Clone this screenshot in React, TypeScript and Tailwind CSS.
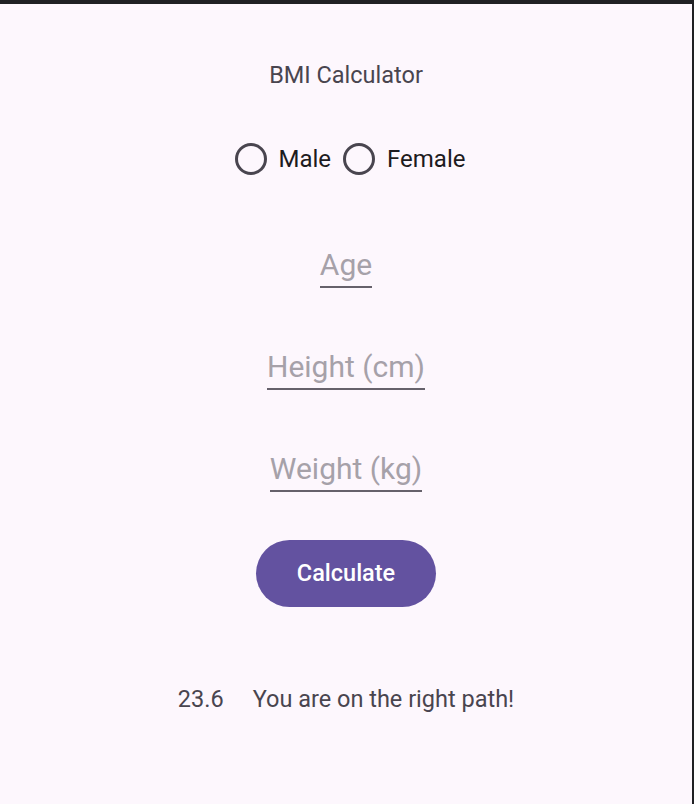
import React from 'react';

function Radio({ label }: { label: string }) {
  return (
    <div className="flex items-center gap-[12px]">
      <div className="w-[32px] h-[32px] rounded-full border-[3px] border-[#49454f]" />
      <span className="text-[24px] leading-[30px] text-[#1d1b20]">{label}</span>
    </div>
  );
}

function Field({ hint, className }: { hint: string; className: string }) {
  return (
    <div className={`border-b-2 border-[#66616b] pb-[3px] ${className}`}>
      <span className="block text-[30px] leading-[36px] text-[#a6a1a9]">{hint}</span>
    </div>
  );
}

export default function App() {
  return (
    <div
      className="w-full h-[804px] bg-[#fdf7fd] border-t-4 border-r-2 border-[#202124] flex flex-col items-center"
      style={{ fontFamily: 'Roboto, "Noto Sans", sans-serif' }}
    >
      <h1 className="mt-[56px] text-[23.5px] leading-[30px] text-[#49454f]">BMI Calculator</h1>

      <div className="mt-[53px] ml-[8px] flex items-center gap-[12px]">
        <Radio label="Male" />
        <Radio label="Female" />
      </div>

      <Field hint="Age" className="mt-[72px]" />
      <Field hint="Height (cm)" className="mt-[61px]" />
      <Field hint="Weight (kg)" className="mt-[61px]" />

      <button className="mt-[48px] w-[180px] h-[67px] rounded-full bg-[#6352a0] text-white text-[23.5px] font-medium">
        Calculate
      </button>

      <div className="mt-[77px] flex items-center gap-[29px] text-[23.5px] leading-[30px] text-[#49454f]">
        <span>23.6</span>
        <span>You are on the right path!</span>
      </div>
    </div>
  );
}
